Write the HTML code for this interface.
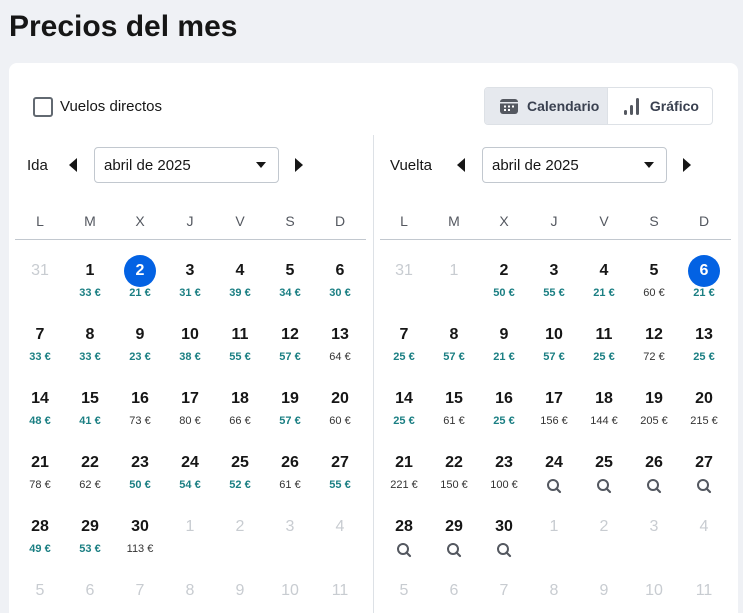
<!DOCTYPE html>
<html><head><meta charset="utf-8"><style>
*{margin:0;padding:0;box-sizing:border-box}
html,body{width:743px;height:613px;overflow:hidden}
body{background:#eff1f5;font-family:"Liberation Sans",sans-serif;color:#161616;position:relative}
h1{position:absolute;left:9px;top:10px;font-size:30px;font-weight:700;color:#161616}
.card{position:absolute;left:9px;top:63px;width:729px;height:550px;background:#fff;border-radius:8px 8px 0 0}
.abs{position:absolute}
.cb{left:33px;top:97px;width:20px;height:20px;border:2px solid #626971;border-radius:3px}
.lbl{font-size:15px;color:#161616}
.tog{left:484px;top:87px;width:229px;height:38px;border:1px solid #dde1e6;border-radius:4px;overflow:hidden;display:flex}
.tog div{display:flex;align-items:center;font-size:14px;font-weight:700;color:#3a4150}
.sel{left:94px;top:147px;width:185px;height:36px;border:1px solid #c2c8cf;border-radius:4px;font-size:15px;padding:9px 0 0 9px}
.dd{position:absolute;right:12px;top:14px;width:0;height:0;border-left:5px solid transparent;border-right:5px solid transparent;border-top:6px solid #161616}
.tl{width:0;height:0;border-top:7px solid transparent;border-bottom:7px solid transparent;border-right:8px solid #161616}
.tr{width:0;height:0;border-top:7px solid transparent;border-bottom:7px solid transparent;border-left:8px solid #161616}
.wd{display:flex;position:absolute;top:213px;width:350px}
.wd span{width:50px;text-align:center;font-size:14px;color:#545860}
.hl{position:absolute;top:239px;height:1px;background:#c2c8cf}
.grid{position:absolute;top:261px;width:350px;display:grid;grid-template-columns:repeat(7,50px);grid-template-rows:repeat(5,64px) 28px}
.c{text-align:center;position:relative}
.n{font-size:16px;font-weight:700;line-height:20px;height:20px;position:relative;z-index:1}
.o .n{color:#c8ccd1;font-weight:400}
.s::before{content:"";position:absolute;left:9px;top:-6px;width:32px;height:32px;border-radius:50%;background:#0362e3}
.s .n{color:#fff}
.p{font-size:11px;margin-top:6px;color:#333}
.t .p{color:#1b7f83;font-weight:700}
.q{margin-top:5px}
</style></head><body>
<h1>Precios del mes</h1>
<div class="card"></div>
<div class="abs cb"></div>
<div class="abs lbl" style="left:60px;top:98px">Vuelos directos</div>
<div class="abs tog">
<div style="width:124px;background:#e6e9ee;padding-left:15px;border-right:1px solid #dde1e6"><svg width="18" height="16" viewBox="0 0 18 16" style="margin-right:9px"><rect x="0" y="1" width="18" height="15" rx="3" fill="#545860"/><rect x="0" y="4" width="18" height="1.5" fill="#e6e9ee"/><g fill="#fff"><rect x="4" y="7.5" width="2" height="2"/><rect x="8" y="7.5" width="2" height="2"/><rect x="12" y="7.5" width="2" height="2"/><rect x="4" y="11" width="2" height="2"/><rect x="8" y="11" width="2" height="2"/></g></svg>Calendario</div>
<div style="width:105px;padding-left:15px"><svg width="18" height="20" viewBox="0 0 18 20" style="margin-right:9px"><rect x="1" y="14" width="3" height="5" rx="1.5" fill="#545860"/><rect x="7" y="9" width="3" height="10" rx="1.5" fill="#545860"/><rect x="13" y="2" width="3" height="17" rx="1.5" fill="#545860"/></svg>Gráfico</div>
</div>
<div class="abs" style="left:373px;top:135px;width:1px;height:478px;background:#dde1e6"></div>
<div class="abs lbl" style="left:27px;top:157px">Ida</div>
<div class="abs tl" style="left:69px;top:158px"></div>
<div class="abs sel">abril de 2025<div class="dd"></div></div>
<div class="abs tr" style="left:295px;top:158px"></div>
<div class="abs lbl" style="left:390px;top:157px">Vuelta</div>
<div class="abs tl" style="left:457px;top:158px"></div>
<div class="abs sel" style="left:482px">abril de 2025<div class="dd"></div></div>
<div class="abs tr" style="left:683px;top:158px"></div>
<div class="wd" style="left:15px"><span>L</span><span>M</span><span>X</span><span>J</span><span>V</span><span>S</span><span>D</span></div>
<div class="wd" style="left:379px"><span>L</span><span>M</span><span>X</span><span>J</span><span>V</span><span>S</span><span>D</span></div>
<div class="hl" style="left:15px;width:351px"></div>
<div class="hl" style="left:380px;width:351px"></div>

<div class="grid" style="left:15px">
<div class="c o"><div class="n">31</div></div>
<div class="c t"><div class="n">1</div><div class="p">33 €</div></div>
<div class="c t s"><div class="n">2</div><div class="p">21 €</div></div>
<div class="c t"><div class="n">3</div><div class="p">31 €</div></div>
<div class="c t"><div class="n">4</div><div class="p">39 €</div></div>
<div class="c t"><div class="n">5</div><div class="p">34 €</div></div>
<div class="c t"><div class="n">6</div><div class="p">30 €</div></div>
<div class="c t"><div class="n">7</div><div class="p">33 €</div></div>
<div class="c t"><div class="n">8</div><div class="p">33 €</div></div>
<div class="c t"><div class="n">9</div><div class="p">23 €</div></div>
<div class="c t"><div class="n">10</div><div class="p">38 €</div></div>
<div class="c t"><div class="n">11</div><div class="p">55 €</div></div>
<div class="c t"><div class="n">12</div><div class="p">57 €</div></div>
<div class="c"><div class="n">13</div><div class="p">64 €</div></div>
<div class="c t"><div class="n">14</div><div class="p">48 €</div></div>
<div class="c t"><div class="n">15</div><div class="p">41 €</div></div>
<div class="c"><div class="n">16</div><div class="p">73 €</div></div>
<div class="c"><div class="n">17</div><div class="p">80 €</div></div>
<div class="c"><div class="n">18</div><div class="p">66 €</div></div>
<div class="c t"><div class="n">19</div><div class="p">57 €</div></div>
<div class="c"><div class="n">20</div><div class="p">60 €</div></div>
<div class="c"><div class="n">21</div><div class="p">78 €</div></div>
<div class="c"><div class="n">22</div><div class="p">62 €</div></div>
<div class="c t"><div class="n">23</div><div class="p">50 €</div></div>
<div class="c t"><div class="n">24</div><div class="p">54 €</div></div>
<div class="c t"><div class="n">25</div><div class="p">52 €</div></div>
<div class="c"><div class="n">26</div><div class="p">61 €</div></div>
<div class="c t"><div class="n">27</div><div class="p">55 €</div></div>
<div class="c t"><div class="n">28</div><div class="p">49 €</div></div>
<div class="c t"><div class="n">29</div><div class="p">53 €</div></div>
<div class="c"><div class="n">30</div><div class="p">113 €</div></div>
<div class="c o"><div class="n">1</div></div>
<div class="c o"><div class="n">2</div></div>
<div class="c o"><div class="n">3</div></div>
<div class="c o"><div class="n">4</div></div>
<div class="c o"><div class="n">5</div></div>
<div class="c o"><div class="n">6</div></div>
<div class="c o"><div class="n">7</div></div>
<div class="c o"><div class="n">8</div></div>
<div class="c o"><div class="n">9</div></div>
<div class="c o"><div class="n">10</div></div>
<div class="c o"><div class="n">11</div></div>
</div>

<div class="grid" style="left:379px">
<div class="c o"><div class="n">31</div></div>
<div class="c o"><div class="n">1</div></div>
<div class="c t"><div class="n">2</div><div class="p">50 €</div></div>
<div class="c t"><div class="n">3</div><div class="p">55 €</div></div>
<div class="c t"><div class="n">4</div><div class="p">21 €</div></div>
<div class="c"><div class="n">5</div><div class="p">60 €</div></div>
<div class="c t s"><div class="n">6</div><div class="p">21 €</div></div>
<div class="c t"><div class="n">7</div><div class="p">25 €</div></div>
<div class="c t"><div class="n">8</div><div class="p">57 €</div></div>
<div class="c t"><div class="n">9</div><div class="p">21 €</div></div>
<div class="c t"><div class="n">10</div><div class="p">57 €</div></div>
<div class="c t"><div class="n">11</div><div class="p">25 €</div></div>
<div class="c"><div class="n">12</div><div class="p">72 €</div></div>
<div class="c t"><div class="n">13</div><div class="p">25 €</div></div>
<div class="c t"><div class="n">14</div><div class="p">25 €</div></div>
<div class="c"><div class="n">15</div><div class="p">61 €</div></div>
<div class="c t"><div class="n">16</div><div class="p">25 €</div></div>
<div class="c"><div class="n">17</div><div class="p">156 €</div></div>
<div class="c"><div class="n">18</div><div class="p">144 €</div></div>
<div class="c"><div class="n">19</div><div class="p">205 €</div></div>
<div class="c"><div class="n">20</div><div class="p">215 €</div></div>
<div class="c"><div class="n">21</div><div class="p">221 €</div></div>
<div class="c"><div class="n">22</div><div class="p">150 €</div></div>
<div class="c"><div class="n">23</div><div class="p">100 €</div></div>
<div class="c"><div class="n">24</div><div class="q"><svg width="16" height="16" viewBox="0 0 16 16"><circle cx="7" cy="7" r="5" fill="none" stroke="#545860" stroke-width="2"/><path d="M10.5 10.5L14 14" stroke="#545860" stroke-width="2.2" stroke-linecap="round"/></svg></div></div>
<div class="c"><div class="n">25</div><div class="q"><svg width="16" height="16" viewBox="0 0 16 16"><circle cx="7" cy="7" r="5" fill="none" stroke="#545860" stroke-width="2"/><path d="M10.5 10.5L14 14" stroke="#545860" stroke-width="2.2" stroke-linecap="round"/></svg></div></div>
<div class="c"><div class="n">26</div><div class="q"><svg width="16" height="16" viewBox="0 0 16 16"><circle cx="7" cy="7" r="5" fill="none" stroke="#545860" stroke-width="2"/><path d="M10.5 10.5L14 14" stroke="#545860" stroke-width="2.2" stroke-linecap="round"/></svg></div></div>
<div class="c"><div class="n">27</div><div class="q"><svg width="16" height="16" viewBox="0 0 16 16"><circle cx="7" cy="7" r="5" fill="none" stroke="#545860" stroke-width="2"/><path d="M10.5 10.5L14 14" stroke="#545860" stroke-width="2.2" stroke-linecap="round"/></svg></div></div>
<div class="c"><div class="n">28</div><div class="q"><svg width="16" height="16" viewBox="0 0 16 16"><circle cx="7" cy="7" r="5" fill="none" stroke="#545860" stroke-width="2"/><path d="M10.5 10.5L14 14" stroke="#545860" stroke-width="2.2" stroke-linecap="round"/></svg></div></div>
<div class="c"><div class="n">29</div><div class="q"><svg width="16" height="16" viewBox="0 0 16 16"><circle cx="7" cy="7" r="5" fill="none" stroke="#545860" stroke-width="2"/><path d="M10.5 10.5L14 14" stroke="#545860" stroke-width="2.2" stroke-linecap="round"/></svg></div></div>
<div class="c"><div class="n">30</div><div class="q"><svg width="16" height="16" viewBox="0 0 16 16"><circle cx="7" cy="7" r="5" fill="none" stroke="#545860" stroke-width="2"/><path d="M10.5 10.5L14 14" stroke="#545860" stroke-width="2.2" stroke-linecap="round"/></svg></div></div>
<div class="c o"><div class="n">1</div></div>
<div class="c o"><div class="n">2</div></div>
<div class="c o"><div class="n">3</div></div>
<div class="c o"><div class="n">4</div></div>
<div class="c o"><div class="n">5</div></div>
<div class="c o"><div class="n">6</div></div>
<div class="c o"><div class="n">7</div></div>
<div class="c o"><div class="n">8</div></div>
<div class="c o"><div class="n">9</div></div>
<div class="c o"><div class="n">10</div></div>
<div class="c o"><div class="n">11</div></div>
</div>
</body></html>
